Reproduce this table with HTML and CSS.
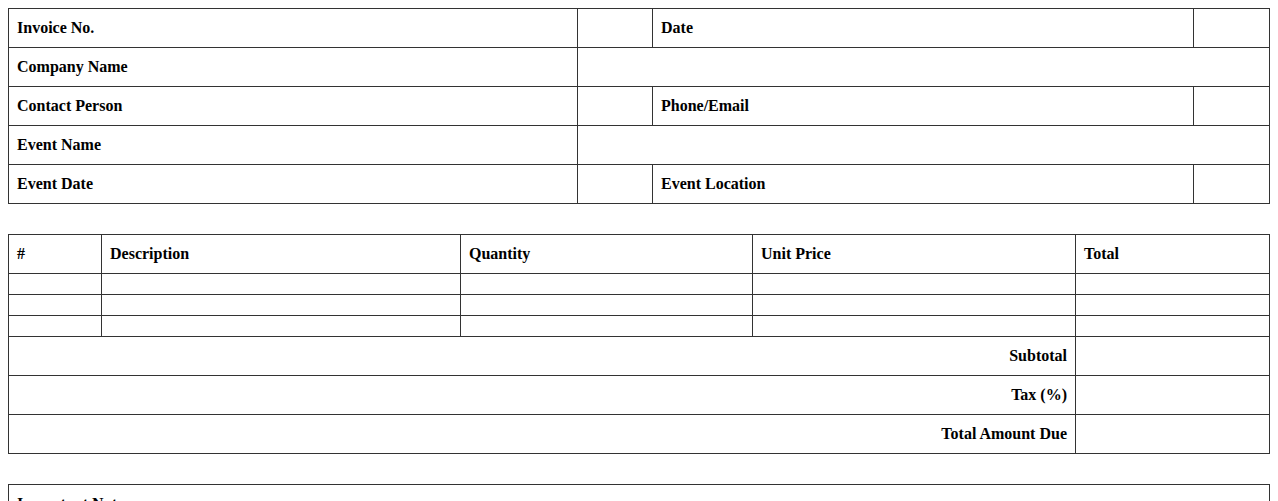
FILE: index.html
```html
<!DOCTYPE html>
<html>
<head>
<meta charset="utf-8">
<link rel="stylesheet" href="styles.css">
</head>
<body>
<table class="grid info">
  <colgroup><col class="c1"><col class="c2"><col class="c3"><col class="c4"></colgroup>
  <tr><th>Invoice No.</th><td></td><th>Date</th><td></td></tr>
  <tr><th>Company Name</th><td colspan="3"></td></tr>
  <tr><th>Contact Person</th><td></td><th>Phone/Email</th><td></td></tr>
  <tr><th>Event Name</th><td colspan="3"></td></tr>
  <tr><th>Event Date</th><td></td><th>Event Location</th><td></td></tr>
</table>

<table class="grid items">
  <colgroup><col class="i1"><col class="i2"><col class="i3"><col class="i4"><col class="i5"></colgroup>
  <tr><th>#</th><th>Description</th><th>Quantity</th><th>Unit Price</th><th>Total</th></tr>
  <tr><td></td><td></td><td></td><td></td><td></td></tr>
  <tr><td></td><td></td><td></td><td></td><td></td></tr>
  <tr><td></td><td></td><td></td><td></td><td></td></tr>
  <tr><th colspan="4" class="right">Subtotal</th><td></td></tr>
  <tr><th colspan="4" class="right">Tax (%)</th><td></td></tr>
  <tr><th colspan="4" class="right">Total Amount Due</th><td></td></tr>
</table>

<table class="grid notes">
  <tr><th>Important Notes</th></tr>
  <tr><td></td></tr>
</table>
</body>
</html>
```
FILE: styles.css
```css
body {
  margin: 8px;
  font-family: "Liberation Serif", "Times New Roman", serif;
  font-size: 16px;
  color: #000;
  background: #fff;
}
.grid {
  width: 100%;
  border-collapse: collapse;
  table-layout: fixed;
  margin-bottom: 30px;
}
.grid th, .grid td {
  border: 1px solid #333;
  padding: 10px 8px;
  text-align: left;
  font-weight: bold;
  line-height: 18px;
}
.grid th.right { text-align: right; }
.c1 { width: 569px; }
.c2 { width: 75px; }
.c3 { width: 541px; }
.c4 { width: 76px; }
.i1 { width: 93px; }
.i2 { width: 359px; }
.i3 { width: 292px; }
.i4 { width: 323px; }
.i5 { width: 194px; }
```
